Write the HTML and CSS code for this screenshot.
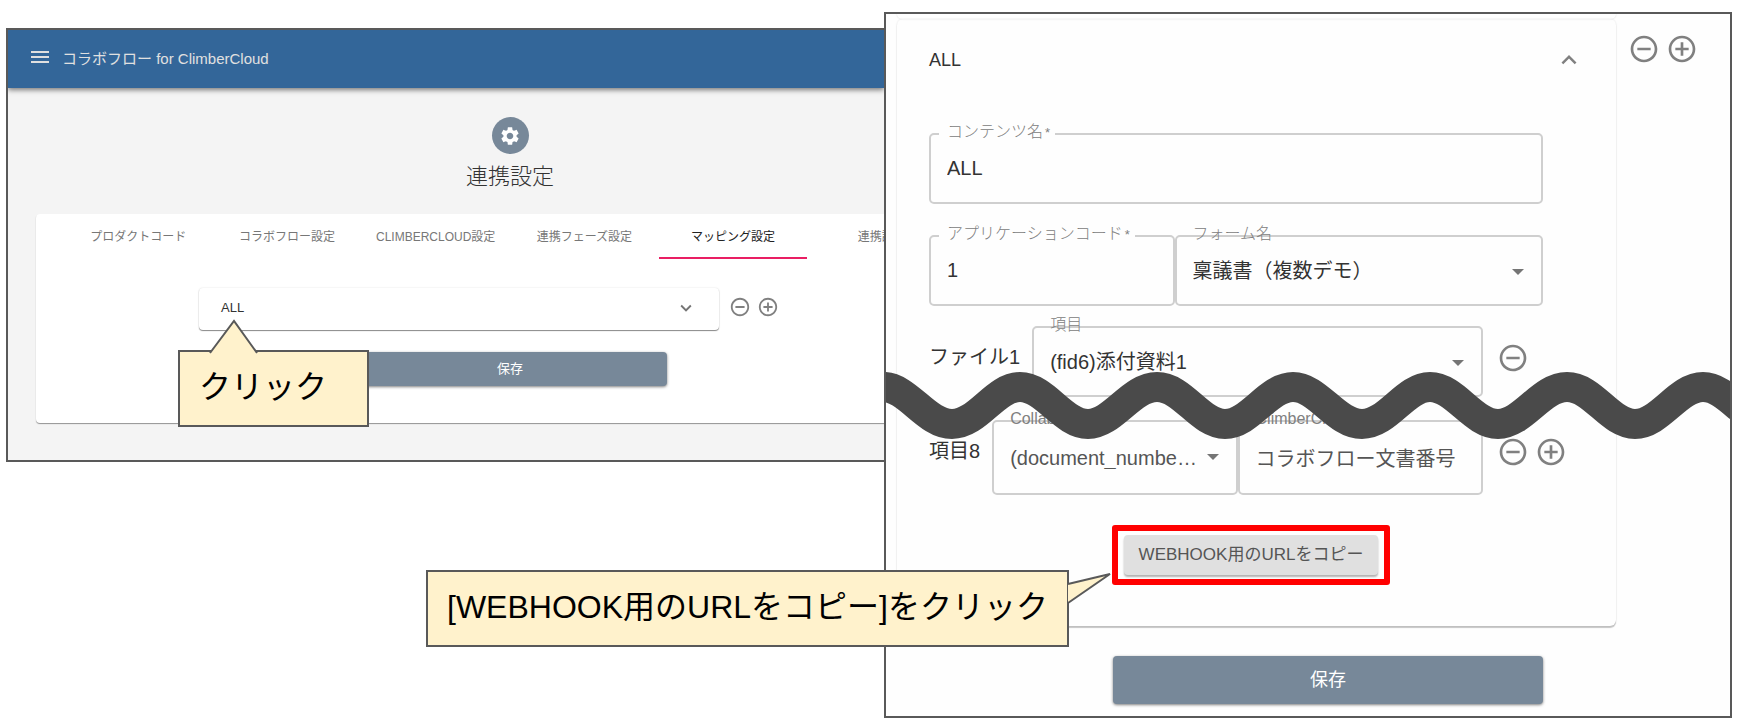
FILE: index.html
```html
<!DOCTYPE html>
<html lang="ja">
<head>
<meta charset="UTF-8">
<meta name="viewport" content="width=device-width, initial-scale=1.0">
<title>コラボフロー for ClimberCloud</title>
<link rel="stylesheet" href="styles.css">
</head>
<body>

<svg class="sprite" aria-hidden="true">
    <symbol id="minus" viewBox="0 0 24 24"><path d="M7 11v2h10v-2H7zm5-9C6.48 2 2 6.48 2 12s4.48 10 10 10 10-4.48 10-10S17.52 2 12 2zm0 18c-4.41 0-8-3.59-8-8s3.59-8 8-8 8 3.59 8 8-3.59 8-8 8z"/></symbol>
    <symbol id="plus" viewBox="0 0 24 24"><path d="M13 7h-2v4H7v2h4v4h2v-4h4v-2h-4V7zm-1-5C6.48 2 2 6.48 2 12s4.48 10 10 10 10-4.48 10-10S17.52 2 12 2zm0 18c-4.41 0-8-3.59-8-8s3.59-8 8-8 8 3.59 8 8-3.59 8-8 8z"/></symbol>
    <symbol id="down" viewBox="0 0 24 24"><path d="M16.59 8.59 12 13.17 7.41 8.59 6 10l6 6 6-6z"/></symbol>
    <symbol id="up" viewBox="0 0 24 24"><path d="M12 8l-6 6 1.41 1.41L12 10.83l4.59 4.58L18 14z"/></symbol>
    <symbol id="menu" viewBox="0 0 24 24"><path d="M3 18h18v-2H3v2zm0-5h18v-2H3v2zm0-7v2h18V6H3z"/></symbol>
    <symbol id="gear" viewBox="0 0 24 24"><path d="M19.14 12.94c.04-.3.06-.61.06-.94 0-.32-.02-.64-.07-.94l2.03-1.58c.18-.14.23-.41.12-.61l-1.92-3.32c-.12-.22-.37-.29-.59-.22l-2.39.96c-.5-.38-1.03-.7-1.62-.94l-.36-2.54c-.04-.24-.24-.41-.48-.41h-3.84c-.24 0-.43.17-.47.41l-.36 2.54c-.59.24-1.13.57-1.62.94l-2.39-.96c-.22-.08-.47 0-.59.22L2.74 8.87c-.12.21-.08.47.12.61l2.03 1.58c-.05.3-.09.63-.09.94s.02.64.07.94l-2.03 1.58c-.18.14-.23.41-.12.61l1.92 3.32c.12.22.37.29.59.22l2.39-.96c.5.38 1.03.7 1.62.94l.36 2.54c.05.24.24.41.48.41h3.84c.24 0 .44-.17.47-.41l.36-2.54c.59-.24 1.13-.56 1.62-.94l2.39.96c.22.08.47 0 .59-.22l1.92-3.32c.12-.22.07-.47-.12-.61l-2.01-1.58zM12 15.6c-1.98 0-3.6-1.62-3.6-3.6s1.62-3.6 3.6-3.6 3.6 1.62 3.6 3.6-1.62 3.6-3.6 3.6z"/></symbol>
    <symbol id="arrow" viewBox="0 0 12 6"><path d="M0 0h12L6 6z"/></symbol>
</svg>

<main class="stage">
    <section class="pane">
        <div class="window window-list">
            <header class="appbar">
                <button type="button" class="icon-btn" aria-label="メニュー"><svg><use href="#menu"/></svg></button>
                <span>コラボフロー for ClimberCloud</span>
            </header>
            <div class="content">
                <div class="heading">
                    <span class="avatar"><svg><use href="#gear"/></svg></span>
                    <h1>連携設定</h1>
                </div>
                <div class="card">
                    <nav class="tabs">
                        <button type="button">プロダクトコード</button>
                        <button type="button">コラボフロー設定</button>
                        <button type="button">CLIMBERCLOUD設定</button>
                        <button type="button">連携フェーズ設定</button>
                        <button type="button" class="active">マッピング設定</button>
                        <button type="button">連携設定</button>
                    </nav>
                    <div class="mapping">
                        <button type="button" class="accordion">ALL<svg><use href="#down"/></svg></button>
                        <div class="actions">
                            <button type="button" class="icon-btn" aria-label="削除"><svg><use href="#minus"/></svg></button>
                            <button type="button" class="icon-btn" aria-label="追加"><svg><use href="#plus"/></svg></button>
                        </div>
                    </div>
                    <button type="button" class="save">保存</button>
                </div>
            </div>
        </div>
        <div class="callout callout-click">
            クリック
            <svg class="tail" viewBox="0 0 52 36"><path d="M2 35 26 3 49 35"/></svg>
        </div>
    </section>

    <section class="pane">
        <div class="window window-detail">
            <div class="panel-row">
                <div class="panels">
                    <div class="panel-prev"></div>
                    <div class="panel">
                        <button type="button" class="panel-head">ALL<svg><use href="#up"/></svg></button>
                        <form class="panel-body">
                            <div class="row wide">
                                <div class="field notched">
                                    <label for="contentName">コンテンツ名<small>*</small></label>
                                    <input type="text" id="contentName" value="ALL">
                                </div>
                            </div>
                            <div class="row wide app-row">
                                <div class="field notched">
                                    <label for="appCode">アプリケーションコード<small>*</small></label>
                                    <input type="text" id="appCode" value="1">
                                </div>
                                <div class="field">
                                    <label for="formName">フォーム名</label>
                                    <select id="formName"><option>稟議書（複数デモ）</option></select>
                                    <svg class="arrow"><use href="#arrow"/></svg>
                                </div>
                            </div>
                            <div class="row file-row">
                                <span class="row-name">ファイル1</span>
                                <div class="field">
                                    <label for="fileItem">項目</label>
                                    <select id="fileItem"><option>(fid6)添付資料1</option></select>
                                    <svg class="arrow"><use href="#arrow"/></svg>
                                </div>
                                <div class="actions">
                                    <button type="button" class="icon-btn" aria-label="削除"><svg><use href="#minus"/></svg></button>
                                </div>
                            </div>
                            <div class="row item-row">
                                <span class="row-name">項目8</span>
                                <div class="pair">
                                    <div class="field">
                                        <label for="collaboItem">Collaboflow</label>
                                        <select id="collaboItem"><option>(document_numbe…</option></select>
                                        <svg class="arrow"><use href="#arrow"/></svg>
                                    </div>
                                    <div class="field">
                                        <label for="climberItem">ClimberCloud</label>
                                        <input type="text" id="climberItem" value="コラボフロー文書番号">
                                    </div>
                                </div>
                                <div class="actions">
                                    <button type="button" class="icon-btn" aria-label="削除"><svg><use href="#minus"/></svg></button>
                                    <button type="button" class="icon-btn" aria-label="追加"><svg><use href="#plus"/></svg></button>
                                </div>
                            </div>
                            <div class="highlight">
                                <button type="button" class="copy">WEBHOOK用のURLをコピー</button>
                            </div>
                        </form>
                    </div>
                </div>
                <div class="actions">
                    <button type="button" class="icon-btn" aria-label="削除"><svg><use href="#minus"/></svg></button>
                    <button type="button" class="icon-btn" aria-label="追加"><svg><use href="#plus"/></svg></button>
                </div>
            </div>
            <button type="button" class="save">保存</button>
            <!-- torn section between the file rows and the item rows -->
            <svg class="wave"><path d="M-139 17c25 0 43 37 68 37s43-37 68-37 43 37 69 37 43-37 68-37 43 37 68 37 43-37 69-37 43 37 68 37 43-37 68-37 43 37 69 37 43-37 68-37 43 37 68 37 43-37 69-37 43 37 68 37 43-37 68-37 43 37 69 37"/></svg>
        </div>
        <div class="callout callout-copy">
            [WEBHOOK用のURLをコピー]をクリック
            <svg class="tail" viewBox="0 0 46 34"><path d="M1 12 43 2 1 31"/></svg>
        </div>
    </section>
</main>

</body>
</html>
```
FILE: styles.css
```css
* {
    box-sizing: border-box;
}

body {
    margin: 0;
    background: #fff;
    color: #333;
    font-family: "Liberation Sans", "Noto Sans CJK JP", sans-serif;
}

button, input, select {
    font: inherit;
    color: inherit;
    margin: 0;
    border: 0;
    padding: 0;
    background: none;
}

svg {
    display: block;
    fill: currentColor;
}

.sprite {
    display: none;
}

.stage {
    display: grid;
    grid-template-columns: 878fr 848fr;
    align-items: start;
    padding: 12px 9px 4px 6px;
}

.pane {
    position: relative;
    min-width: 0;
}

.window {
    border: 2px solid #595959;
    overflow: hidden;
}

.actions {
    display: flex;
    align-items: flex-start;
    gap: 6px;
    color: #808080;
}

/* list window */
.window-list {
    margin-top: 16px;
    border-right: 0;
    background: #f4f4f4;
}

.appbar {
    position: relative;
    display: flex;
    align-items: center;
    gap: 10px;
    height: 58px;
    padding: 0 20px 4px;
    background: #336699;
    color: #e0e0e0;
    font-size: 15px;
    box-shadow: 0 2px 5px rgba(0, 0, 0, 0.5);
}

.window-list svg {
    width: 22px;
    height: 22px;
}

.appbar .icon-btn svg {
    width: 24px;
    height: 24px;
}

/* the page is wider than the window and runs under the next one */
.content {
    width: calc(100% + 128px);
    padding: 29px 28px 37px;
}

.heading {
    display: flex;
    flex-direction: column;
    align-items: center;
    gap: 8px;
    margin-bottom: 22px;
}

.avatar {
    display: flex;
    align-items: center;
    justify-content: center;
    width: 37px;
    height: 37px;
    border-radius: 50%;
    background: #778899;
    color: #fff;
}

.heading h1 {
    margin: 0;
    font-size: 22px;
    font-weight: 300;
    line-height: 30px;
}

.card {
    padding: 0 28px 37px;
    border-radius: 4px;
    background: #fff;
    box-shadow: 0 1px 1px rgba(0, 0, 0, 0.4);
}

.tabs {
    display: grid;
    grid-template-columns: repeat(6, 1fr);
    margin-bottom: 29px;
}

.tabs button {
    height: 45px;
    border-bottom: 2px solid transparent;
    color: #777;
    font-size: 12px;
    white-space: nowrap;
}

.tabs .active {
    border-color: #e91e63;
    color: #222;
}

.mapping {
    display: flex;
    align-items: center;
    gap: 10px;
    width: 622px;
    margin: 0 auto 22px;
}

.mapping .actions {
    padding-bottom: 4px;
}

.accordion {
    display: flex;
    align-items: center;
    justify-content: space-between;
    width: 520px;
    height: 42px;
    padding: 0 22px 3px;
    border-radius: 4px;
    font-size: 13px;
    box-shadow: 0 1px 1px rgba(0, 0, 0, 0.45), 0 0 2px rgba(0, 0, 0, 0.12);
}

.accordion svg {
    color: #757575;
}

.save {
    display: block;
    padding-bottom: 4px;
    border-radius: 4px;
    background: #778899;
    color: #fff;
    box-shadow: 0 1px 3px rgba(0, 0, 0, 0.5);
}

.card .save {
    width: 314px;
    height: 34px;
    margin: 0 auto;
    font-size: 13px;
}

/* detail window */
.window-detail {
    position: relative;
    padding-bottom: 12px;
    background: #fefefe;
}

.window-detail .icon-btn svg {
    width: 32px;
    height: 32px;
}

.panel-row {
    display: flex;
    margin-bottom: 30px;
    padding-left: 11px;
}

.panels {
    flex: 1;
    min-width: 0;
}

.panel-row > .actions {
    width: 114px;
    padding: 19px 0 0 12px;
}

.panel-prev {
    height: 5px;
    border-radius: 0 0 6px 6px;
    box-shadow: 0 0 2px rgba(0, 0, 0, 0.15);
}

.panel {
    padding: 0 32px 41px;
    border-radius: 6px;
    box-shadow: 0 2px 1px rgba(0, 0, 0, 0.22), 0 0 2px rgba(0, 0, 0, 0.12);
}

.panel-head {
    display: flex;
    align-items: center;
    justify-content: space-between;
    width: 100%;
    height: 82px;
    margin-bottom: 32px;
    font-size: 18px;
}

.panel-head svg {
    width: 30px;
    height: 30px;
    color: #808080;
}

.row {
    display: flex;
    align-items: flex-start;
}

.row > .field {
    flex: 1;
}

.wide {
    margin-bottom: 31px;
    padding-right: 41px;
}

.app-row {
    display: grid;
    grid-template-columns: 2fr 3fr;
    margin-bottom: 20px;
}

.file-row {
    margin-bottom: 23px;
}

.item-row {
    margin-bottom: 30px;
}

.row-name {
    margin-right: 12px;
    font-size: 20px;
    line-height: 62px;
}

.pair {
    display: grid;
    grid-template-columns: 1fr 1fr;
    flex: 1;
}

.row > .actions {
    width: 101px;
    padding: 16px 0 0 14px;
}

.field {
    position: relative;
    min-width: 0;
}

.field input,
.field select {
    display: block;
    width: 100%;
    height: 71px;
    padding: 0 16px;
    border: 2px solid #cfcfcf;
    border-radius: 5px;
    background: transparent;
    font-size: 20px;
    appearance: none;
}

.item-row input,
.item-row select {
    height: 75px;
    padding-right: 0;
    color: #555;
}

.field label {
    position: absolute;
    top: -12px;
    left: 10px;
    padding: 0 8px;
    color: #808080;
    font-size: 16px;
    font-weight: 300;
    line-height: 22px;
    white-space: nowrap;
}

.notched label {
    padding-right: 5px;
    background: #fefefe;
}

.field small {
    margin-left: 2px;
    font-size: 13px;
}

.arrow {
    position: absolute;
    top: 34px;
    right: 19px;
    width: 12px;
    height: 6px;
    color: #757575;
}

.highlight {
    width: 278px;
    margin-left: 183px;
    padding: 4px 6px;
    border: 6px solid #f00;
    border-radius: 3px;
}

.copy {
    display: block;
    width: 100%;
    height: 40px;
    padding-bottom: 6px;
    border-radius: 4px;
    background: #e0e0e0;
    color: #555;
    font-size: 17px;
    white-space: nowrap;
    box-shadow: 0 2px 2px rgba(0, 0, 0, 0.3);
}

.window-detail > .save {
    width: calc(100% - 414px);
    height: 48px;
    margin-left: 227px;
    font-size: 18px;
}

.wave {
    position: absolute;
    top: 356px;
    left: 0;
    width: 100%;
    height: 72px;
}

.wave path {
    fill: none;
    stroke: #4a4a4a;
    stroke-width: 30px;
}

/* callouts */
.callout {
    position: absolute;
    height: 77px;
    padding: 0 19px;
    border: 2px solid #595959;
    background: #fff2cc;
    color: #000;
    font-size: 32px;
    line-height: 71px;
    white-space: nowrap;
}

.callout-click {
    top: 338px;
    left: 172px;
    width: 191px;
}

.callout-copy {
    top: 558px;
    left: -458px;
    width: 643px;
}

.tail {
    position: absolute;
    fill: #fff2cc;
    stroke: #595959;
    stroke-width: 2px;
}

.callout-click .tail {
    top: -34px;
    left: 28px;
    width: 52px;
    height: 36px;
}

.callout-copy .tail {
    top: 0;
    left: 639px;
    width: 46px;
    height: 34px;
}
```
